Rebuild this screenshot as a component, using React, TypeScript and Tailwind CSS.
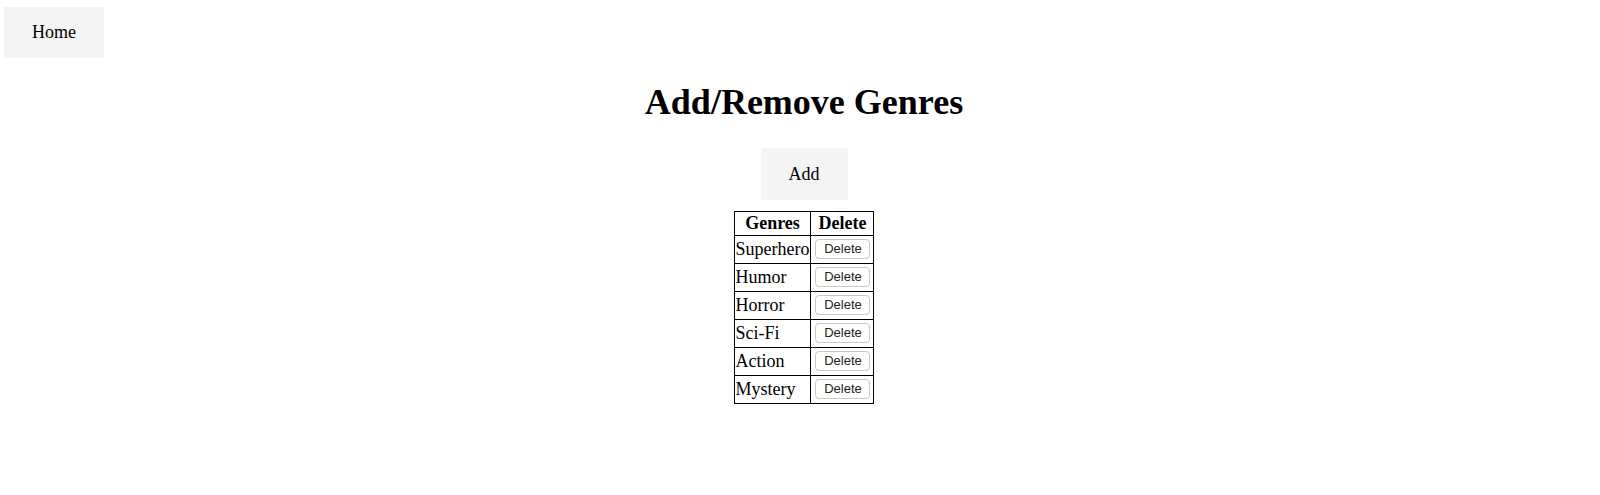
const genres = ["Superhero", "Humor", "Horror", "Sci-Fi", "Action", "Mystery"];

export default function App() {
    return (
        <div className="min-h-[495px] bg-white text-black font-['Liberation_Serif',serif]">
            <nav className="pt-[7px] pl-[4px]">
                <button className="bg-[#f4f4f4] px-[28px] py-[15px] text-[18px] leading-[21px]">Home</button>
            </nav>

            <main className="flex flex-col items-center pl-2">
                <h1 className="mt-[24px] text-[36px] leading-[41px] font-bold">Add/Remove Genres</h1>

                <button className="mt-[25px] bg-[#f4f4f4] px-[28px] py-[15px] text-[18px] leading-[22px]">Add</button>

                <table className="mt-[11px] border-collapse border border-black text-[18px] leading-[21px]">
                    <thead>
                        <tr>
                            <th className="border border-black p-[1px] font-bold text-center">Genres</th>
                            <th className="border border-black p-[1px] font-bold text-center">Delete</th>
                        </tr>
                    </thead>
                    <tbody>
                        {genres.map((g) => (
                            <tr key={g}>
                                <td className="border border-black p-[1px] text-left">{g}</td>
                                <td className="border border-black p-[1px]">
                                    <button className="block h-[20px] w-[55px] ml-[3px] mr-[2px] mt-[2px] mb-[3px] rounded-[4px] border border-[#c8c8c8] bg-white font-['Liberation_Sans',sans-serif] text-[13px] leading-[18px] text-[#222]">
                                        Delete
                                    </button>
                                </td>
                            </tr>
                        ))}
                    </tbody>
                </table>
            </main>
        </div>
    );
}
